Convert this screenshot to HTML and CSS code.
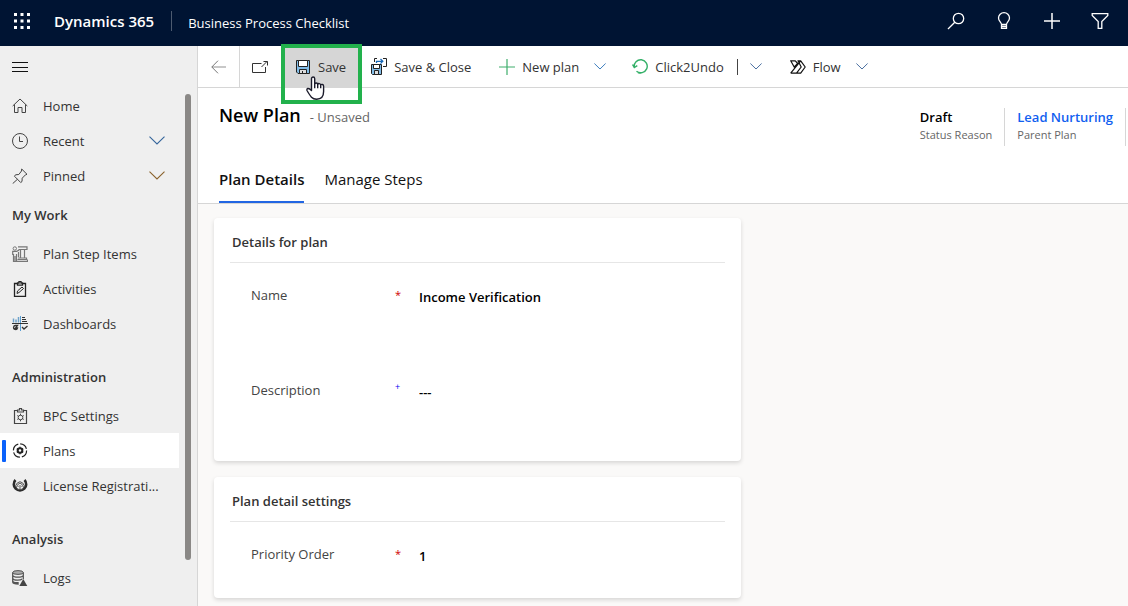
FILE: index.html
```
<!DOCTYPE html>
<html lang="en">
<head>
<meta charset="utf-8">
<title>New Plan - Dynamics 365</title>
<link rel="stylesheet" href="styles.css">
</head>
<body>
<div class="app">
  <header class="topbar">
    <button class="icon-btn waffle" aria-label="App launcher">
      <svg width="16" height="16" viewBox="0 0 16 16" fill="#fff"><path d="M0 0h3v3H0zM6.5 0h3v3h-3zM13 0h3v3h-3zM0 6.500h3v3H0zM6.500 6.500h3v3h-3zM13 6.500h3v3h-3zM0 13h3v3H0zM6.500 13h3v3h-3zM13 13h3v3h-3z"/></svg>
    </button>
    <span class="brand">Dynamics 365</span>
    <span class="app-name">Business Process Checklist</span>
    <div class="top-actions">
      <button class="icon-btn" aria-label="Search"><svg width="18" height="18" viewBox="0 0 18 18" fill="none" stroke="#fff" stroke-width="1.300"><circle cx="11.500" cy="6.500" r="5.200"/><path d="M7.800 10.200 1 17"/></svg></button>
      <button class="icon-btn" aria-label="Ideas"><svg width="18" height="18" viewBox="0 0 18 18" fill="none" stroke="#fff" stroke-width="1.300"><path d="M6.500 12.500c0-2.200-3-3.300-3-6.500a5.500 5.300 0 0 1 11 0c0 3.200-3 4.300-3 6.500zM6.500 12.500v3.900h5v-3.900M6.500 14.500h5"/></svg></button>
      <button class="icon-btn" aria-label="New"><svg width="18" height="18" viewBox="0 0 18 18" fill="none" stroke="#fff" stroke-width="1.500"><path d="M9 1v16M1 9h16"/></svg></button>
      <button class="icon-btn" aria-label="Filter"><svg width="18" height="18" viewBox="0 0 18 18" fill="none" stroke="#fff" stroke-width="1.300"><path d="M1.200 1.700h15.600v1.800l-6 6v6.800H7.200V9.500l-6-6z"/></svg></button>
    </div>
  </header>

  <div class="body">
    <nav class="sidebar" aria-label="Site map">
      <button class="icon-btn burger" aria-label="Collapse menu"><svg width="16" height="10" viewBox="0 0 16 10" stroke="#111" stroke-width="1"><path d="M0 .5h16M0 5.500h16M0 9.500h16"/></svg></button>
      <div class="nav-area">
        <div class="nav-list">
          <a class="nav-item" href="#"><svg width="16" height="16" viewBox="0 0 16 16" fill="none" stroke="#444"><path d="M.7 8 8 1l7.300 7M2.500 6.500v8h3.500V9.500h4v5h3.500v-8"/></svg><span>Home</span></a>
          <a class="nav-item" href="#"><svg width="16" height="16" viewBox="0 0 16 16" fill="none" stroke="#444"><circle cx="8" cy="8" r="7.500"/><path d="M7.500 3.500v5H11"/></svg><span>Recent</span><svg class="chev" width="16" height="9" viewBox="0 0 16 9" fill="none" stroke="#35659b" stroke-width="1.100"><path d="m.5.7 7.500 7.300L15.500.7"/></svg></a>
          <a class="nav-item" href="#"><svg width="16" height="16" viewBox="0 0 16 16" fill="none" stroke="#444"><path d="m9.700 1 5.300 5.300-1.500.5-3.300 3.400-.2 3.300-1.300 1L2.500 8.300l1-1.500 3.300-.3L9.500 3zM5.400 11.300.7 15.600"/></svg><span>Pinned</span><svg class="chev" width="16" height="9" viewBox="0 0 16 9" fill="none" stroke="#8a622c" stroke-width="1.100"><path d="m.5.7 7.500 7.300L15.500.7"/></svg></a>
        </div>
        <h2 class="nav-head">My Work</h2>
        <div class="nav-list">
          <a class="nav-item" href="#"><svg width="16" height="16" viewBox="0 0 16 16" fill="none" stroke="#777"><circle cx="2.800" cy="2.500" r="1.700"/><path stroke-width="1.200" d="M.7 9V5.300h4L7.200 4M1.500 8v7.500h3V8M3 10v5M6 .8h9v2.700H6.500M8.500 3.500v8M12.500 3.500v8M6.500 6v5M6 12h8.500v1.500H5.500M4.500 15.400h11v-2"/></svg><span>Plan Step Items</span></a>
          <a class="nav-item" href="#"><svg width="16" height="16" viewBox="0 0 16 16" fill="none" stroke="#222" stroke-width="1.300"><path d="M5 2.500H2.500v12.800h11V2.500H11M5.500 4.200V2h1.500V.6h2V2h1.500v2.200z"/><path d="m5 12.500.5-2.500 4.500-4 1.500 1.500-4.500 4z" stroke-width="1"/></svg><span>Activities</span></a>
          <a class="nav-item" href="#"><svg width="16" height="16" viewBox="0 0 16 16" fill="none" stroke="#333"><path stroke="#6fa3cb" stroke-width="1.500" d="M1.500 2.500v4M4 3.500v3M6.500 1v5.500"/><path stroke="#5a9fd4" d="M8.500 0v15"/><path stroke-width="1.200" d="M0 7.500h16M10 1.500h3M10 3.500h4M10 5.500h5"/><path d="M5.500 9.500H3.800A2 2 0 1 0 5.500 12H3.500zM10 11l2 2 3.500-3" stroke-width="1.300"/></svg><span>Dashboards</span></a>
        </div>
        <h2 class="nav-head spaced">Administration</h2>
        <div class="nav-list">
          <a class="nav-item" href="#"><svg width="16" height="16" viewBox="0 0 16 16" fill="none" stroke="#444"><path stroke-width="1.200" d="M5 2.500H2.500v13h12v-13H12M5.500 4V2h2V.5h2V2h2v2z"/><path d="M8.500 5.700v1.500M8.500 11.800v1.500M5.200 7.600l1.300.7M10.500 10.700l1.300.7M5.200 11.400l1.300-.7M10.500 8.300l1.300-.7"/><circle cx="8.500" cy="9.500" r="2.300"/></svg><span>BPC Settings</span></a>
          <a class="nav-item active" href="#"><svg width="16" height="16" viewBox="0 0 16 16" fill="none" stroke="#222"><circle cx="8" cy="7.500" r="6.600" stroke-width="1.200" stroke-dasharray="8.400 1.970"/><circle cx="8" cy="7.500" r="2.300" stroke-width="2"/><path stroke-width="1.500" d="M8 3.800v1M8 10.200v1M4.800 5.700l.9.500M10.300 8.800l.9.500M4.800 9.300l.9-.5M10.300 6.200l.9-.5"/></svg><span>Plans</span></a>
          <a class="nav-item" href="#"><svg width="16" height="16" viewBox="0 0 16 16" fill="none" stroke="#2b2b2b"><path stroke-width="2.600" d="M3.500 2a6.200 6.200 0 1 0 9 0"/><path stroke="#555" d="M4.800 10.300a4 4 0 1 1 6.400 0M6.200 9a2.300 2.300 0 1 1 3.600 0M8 7v4M5.500 11.500h5"/></svg><span>License Registrati...</span></a>
        </div>
        <h2 class="nav-head spaced">Analysis</h2>
        <div class="nav-list">
          <a class="nav-item" href="#"><svg width="16" height="16" viewBox="0 0 16 16" fill="none" stroke="#555"><ellipse cx="6" cy="2.500" rx="5.300" ry="1.900" fill="#aaa"/><path stroke-width="1.300" d="M.7 2.500v9.500c0 1 2 2 6 2M11.300 2.500V9M.7 5.500c1 2.200 9.600 2.200 10.600 0M.7 8.500c1 2.200 7.600 2.200 9.600.5M.7 11.300c1 1.200 3 1.500 6 1.400"/><path fill="#444" stroke="none" d="m11.300 9 4 7h-8z"/></svg><span>Logs</span></a>
        </div>
      </div>
      <div class="scroll-thumb"></div>
    </nav>

    <main class="main">
      <div class="commands" role="toolbar" aria-label="Commands">
        <button class="cmd back" aria-label="Back"><svg width="15" height="14" viewBox="0 0 15 14" fill="none" stroke="#777"><path d="M.8 7H15" stroke="#aaa" stroke-width="1.300"/><path d="M7 .7.8 7 7 13.300"/></svg></button>
        <button class="cmd popout" aria-label="Open in new window"><svg width="16" height="12" viewBox="0 0 16 12" fill="none" stroke="#333"><path d="M9.500 2.500h-9v9h13V6M9.500 6l5.500-5.500M11.500.5h4v4"/></svg></button>
        <div class="save-wrap">
          <button class="cmd save"><svg width="14" height="14" viewBox="0 0 14 14" fill="none" stroke="#222"><path fill="#83bde8" d="M.5.5h13v13H2L.5 12z"/><path fill="#fff" d="M2.500.5h9v6h-9z"/><path fill="#ddd" d="M3.500 9.500h7v4h-7z"/><path d="M6.500 11v2.500"/></svg>Save</button>
          <div class="highlight">
            <svg class="pointer" width="20" height="25" viewBox="0 0 20 25"><path fill="#fff" stroke="#1b1b2b" stroke-width="1.400" stroke-linejoin="round" d="M5.500 14.500V2.700c0-2.300 3.200-2.300 3.200 0V8c.3-1.500 2.900-1.400 3 .4.500-1.300 2.900-1.100 3 .6.700-1 2.900-.7 2.900 1.200v5.300c0 4-2 7.700-7 7.700-4.500 0-6-2.500-9.600-8.700-.6-2 1.400-3.300 4.500 0zM8.700 8v4.200M11.700 8.500v3.700M14.700 9.200v3"/></svg>
          </div>
        </div>
        <button class="cmd"><svg width="16" height="17" viewBox="0 0 16 17" fill="none" stroke="#222"><path fill="#83bde8" d="M.5 6.500h10v10h-9l-1-1z"/><path fill="#fff" d="M2.500 6.500h6v4h-6z"/><path fill="#ddd" d="M3.500 12.500h4v4h-4z"/><path d="M3.500 4V.5H6M12 .5h3.500v8H12"/><path stroke="#1668b8" stroke-width="1.300" d="M5.500 5V3.300h6M9.500 1l2.300 2.300-2.300 2.300"/></svg>Save &amp; Close</button>
        <button class="cmd new"><svg width="16" height="16" viewBox="0 0 16 16" stroke="#3fae6c" stroke-width="1.200"><path d="M8 0v16M0 8h16"/></svg>New plan<svg class="drop" width="12" height="7" viewBox="0 0 12 7" fill="none" stroke="#3f7fbf"><path d="m.4.5 5.600 5.500L11.600.5"/></svg></button>
        <button class="cmd undo"><svg width="16" height="15" viewBox="0 0 16 15" fill="none" stroke="#34b068" stroke-width="1.400"><path d="M2.300 8.300A6.500 6.500 0 1 1 4.500 12.200M6 13.500a6.500 6.500 0 0 0 3 .6M.5 5.500l1.800 3 3-1.800"/></svg>Click2Undo</button>
        <button class="cmd split" aria-label="More undo options"><svg width="12" height="7" viewBox="0 0 12 7" fill="none" stroke="#4a6fa0"><path d="m.4.5 5.600 5.500L11.600.5"/></svg></button>
        <button class="cmd flow"><svg width="16" height="14" viewBox="0 0 16 14" fill="none" stroke="#111" stroke-width="1.200" stroke-linejoin="round"><path d="M.7.800h4.600L7.700 3.500 4.200 7zM8 .800h2.700L15.200 7l-4.500 6.200H6.500L11.200 7zM.7 13.200 10.700.8M.7 13.200h5.800L11.200 7"/></svg>Flow<svg class="drop" width="12" height="7" viewBox="0 0 12 7" fill="none" stroke="#4a6fa0"><path d="m.4.5 5.600 5.500L11.600.5"/></svg></button>
      </div>

      <section class="record-head">
        <div class="title-row">
          <h1 class="title">New Plan</h1>
          <span class="state">- Unsaved</span>
          <dl class="facts">
            <div class="fact"><dd>Draft</dd><dt>Status Reason</dt></div>
            <div class="fact"><dd><a href="#">Lead Nurturing</a></dd><dt>Parent Plan</dt></div>
          </dl>
        </div>
        <div class="tabs" role="tablist">
          <button class="tab selected" role="tab" aria-selected="true">Plan Details</button>
          <button class="tab" role="tab" aria-selected="false">Manage Steps</button>
        </div>
      </section>

      <form class="form">
        <div class="column">
          <section class="card">
            <h2 class="card-title">Details for plan</h2>
            <div class="field tall"><label for="name">Name</label><span class="mark required">*</span><input id="name" type="text" value="Income Verification"></div>
            <div class="field desc"><label for="desc">Description</label><span class="mark recommended">+</span><input id="desc" type="text" value="---"></div>
          </section>
          <section class="card">
            <h2 class="card-title">Plan detail settings</h2>
            <div class="field"><label for="prio">Priority Order</label><span class="mark required">*</span><input id="prio" type="text" value="1"></div>
          </section>
        </div>
      </form>
    </main>
  </div>
</div>
</body>
</html>
```
FILE: styles.css
```
* { box-sizing: border-box; }
body {
  margin: 0;
  font-family: "Open Sans", "Noto Sans", sans-serif;
  font-size: 13px;
  line-height: 20px;
  color: #333;
  background: #faf9f8;
}
button, input { font: inherit; color: inherit; }
button { border: 0; background: none; padding: 0; cursor: pointer; }
a { color: inherit; text-decoration: none; }
h1, h2, dl, dd { margin: 0; }
svg { flex: none; }

.app { display: flex; flex-direction: column; height: 100vh; overflow: hidden; }

.topbar {
  flex: none;
  display: flex;
  align-items: center;
  height: 46px;
  padding: 0 19px 4px 14px;
  background: #001433;
  color: #fff;
}
.icon-btn { display: flex; align-items: center; justify-content: center; }
.brand {
  margin-left: 24px;
  padding-right: 17px;
  border-right: 1px solid #4d5b70;
  font-size: 15px;
  font-weight: 600;
}
.app-name { margin-left: 16px; padding-top: 3px; }
.top-actions { display: flex; gap: 30px; margin-left: auto; }

.body { flex: 1; display: flex; min-height: 0; }

.sidebar {
  position: relative;
  flex: none;
  width: 198px;
  border-right: 1px solid #d6d6d6;
  background: #efefef;
  overflow: hidden;
}
.burger { height: 42px; padding-left: 12px; }
.nav-area { margin-right: 18px; }
.nav-item { display: flex; align-items: center; height: 35px; padding: 0 14px 0 12px; }
.nav-item span { margin-left: 15px; white-space: nowrap; }
.chev { margin-left: auto; }
.nav-item.active { background: #fff; padding-left: 0; }
.nav-item.active::before {
  content: "";
  width: 4px;
  height: 22px;
  margin: 0 6px 0 2px;
  border-radius: 1px;
  background: #0b62fb;
}
.nav-head {
  padding: 12px 12px 11px;
  font-size: 13px;
  line-height: 20px;
  font-weight: 600;
}
.nav-head.spaced { margin-top: 14px; }
.scroll-thumb {
  position: absolute;
  top: 48px;
  right: 6px;
  width: 6px;
  height: 466px;
  border-radius: 3px;
  background: #8a8886;
}

.main { flex: 1; display: flex; flex-direction: column; min-width: 0; }

.commands {
  display: flex;
  height: 42px;
  border-bottom: 1px solid #d6d6d6;
  background: #fff;
}
.cmd { display: flex; align-items: center; gap: 7px; white-space: nowrap; }
.back { width: 42px; justify-content: center; border-right: 1px solid #d6d6d6; }
.popout { width: 45px; padding-left: 12px; }
.save-wrap { position: relative; display: flex; margin-right: 13px; }
.save { gap: 8px; padding: 0 12px 0 11px; background: #d6d6d6; }
.highlight {
  position: absolute;
  top: -2px;
  left: -4px;
  right: -4px;
  height: 60px;
  border: 4px solid #22b14c;
  pointer-events: none;
}
.pointer { position: absolute; top: 28px; left: 21px; }
.new { margin-left: 28px; }
.drop { margin-left: 8px; }
.undo { margin-left: 26px; }
.split { margin-left: 13px; }
.split::before { content: ""; width: 1px; height: 16px; margin-right: 5px; background: #444; }
.flow { margin-left: 28px; }

.record-head { padding: 14px 0 0 21px; border-bottom: 1px solid #d6d6d6; background: #fff; }
.title-row { display: flex; align-items: flex-start; }
.title { font-size: 18px; line-height: 26px; font-weight: 600; color: #000; }
.state { margin-left: 9px; padding-top: 5px; color: #666; }
.facts { display: flex; margin-left: auto; padding-top: 6px; padding-right: 2px; }
.fact { display: flex; flex-direction: column; height: 38px; padding: 0 12px; border-right: 1px solid #d6d6d6; }
.fact dd { line-height: 18px; font-weight: 600; color: #000; }
.fact dt { font-size: 11px; line-height: 18px; color: #666; }
.fact a { color: #1160f0; }
.tabs { display: flex; gap: 20px; margin-top: 18px; }
.tab { height: 39px; padding-bottom: 9px; font-size: 15px; color: #111; white-space: nowrap; }
.tab.selected { padding-bottom: 7px; border-bottom: 2px solid #2266e3; font-weight: 600; }

.form {
  flex: 1;
  display: grid;
  grid-template-columns: minmax(0, 27fr) minmax(0, 19fr);
  padding: 14px 16px 0;
}
.column { display: flex; flex-direction: column; gap: 16px; }
.card {
  padding: 0 16px 30px;
  border-radius: 4px;
  background: #fff;
  box-shadow: 0 2px 4px rgba(0, 0, 0, 0.14);
}
.card-title {
  padding: 14px 2px 10px;
  border-bottom: 1px solid #e6e6e6;
  font-size: 13px;
  line-height: 20px;
  font-weight: 600;
}
.field {
  display: grid;
  grid-template-columns: 144px 23px minmax(0, 1fr);
  align-items: start;
  margin-top: 22px;
  padding-left: 21px;
}
.field label { color: #444; }
.field input {
  width: 100%;
  height: 24px;
  padding: 0 1px;
  border: 0;
  background: none;
  font-weight: 600;
  color: #000;
}
.field.tall { height: 95px; }
.field.desc { height: 51px; margin-top: 0; }
.mark { font-size: 11px; }
.required { color: #d00000; }
.recommended { color: #0000f0; font-size: 9px; line-height: 14px; }
```
